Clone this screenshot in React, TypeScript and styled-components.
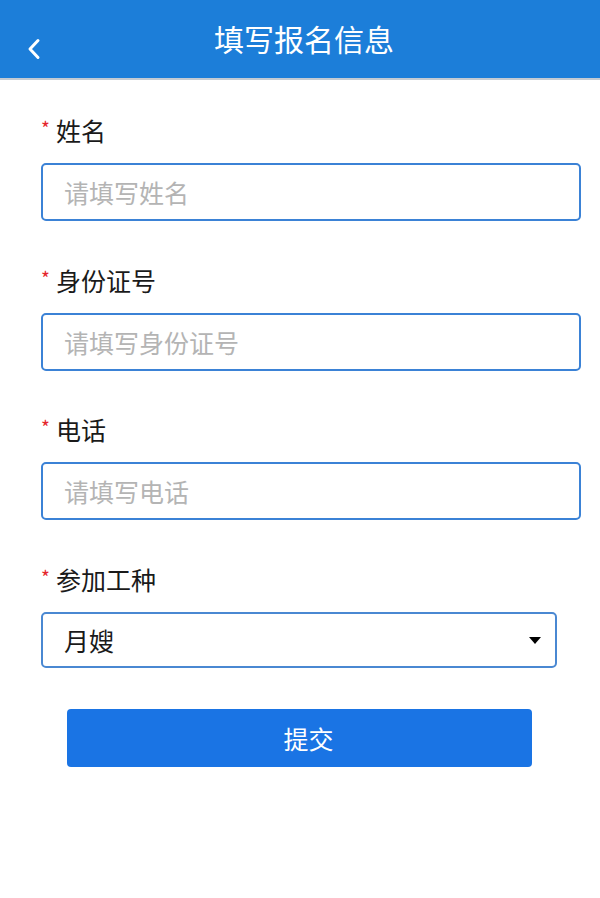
import React, { useState } from 'react';
import styled, { createGlobalStyle } from 'styled-components';

const GlobalStyle = createGlobalStyle`
  html, body {
    margin: 0;
    padding: 0;
    background: #fff;
    font-family: "Noto Sans CJK SC", "Noto Sans", sans-serif;
  }
  * {
    box-sizing: border-box;
  }
`;

const StyledPage = styled.div`
  width: 600px;
  min-height: 898px;
  background: #fff;
`;

const StyledHeader = styled.header`
  height: 80px;
  display: grid;
  grid-template-columns: 1fr auto 1fr;
  align-items: center;
  background-color: #1c7ed9;
  border-bottom: 2px solid #c4cbd3;
`;

const StyledBack = styled.button`
  justify-self: start;
  margin: 20px 0 0 23px;
  padding: 4px;
  border: 0;
  background: transparent;
  display: flex;
  cursor: pointer;
`;

const StyledTitle = styled.h1`
  margin: 0 0 2px 8px;
  font-size: 30px;
  font-weight: 400;
  line-height: 40px;
  color: #fff;
`;

const StyledForm = styled.form`
  padding: 35px 19px 0 41px;
  display: flex;
  flex-direction: column;
`;

const StyledField = styled.div`
  display: flex;
  flex-direction: column;
  margin-bottom: 43.5px;

  &:last-of-type {
    margin-bottom: 41px;
  }
`;

const StyledLabel = styled.label`
  display: flex;
  align-items: center;
  height: 30px;
  margin-bottom: 18px;
  font-size: 25px;
  line-height: 30px;
  color: #1a1a1a;
`;

const StyledRequired = styled.span`
  color: #e5262b;
  font-size: 19px;
  line-height: 19px;
  margin: -5px 6px 0 0;
`;

const StyledInput = styled.input`
  width: 540px;
  height: 58px;
  padding: 0 21px;
  border: 2px solid #3b82d6;
  border-radius: 5px;
  font-family: inherit;
  font-size: 25px;
  color: #1a1a1a;
  outline: none;
  background: #fff;

  &::placeholder {
    color: #b4b4b4;
  }
`;

const StyledSelectWrap = styled.div`
  position: relative;
  width: 516px;
`;

const StyledSelect = styled.select`
  width: 100%;
  height: 56px;
  padding: 0 21px;
  border: 2px solid #4a88d2;
  border-radius: 5px;
  font-family: inherit;
  font-size: 25px;
  color: #1a1a1a;
  background: #fff;
  appearance: none;
  -webkit-appearance: none;
  outline: none;
`;

const StyledCaret = styled.span`
  position: absolute;
  right: 16px;
  top: 25px;
  width: 0;
  height: 0;
  border-left: 6px solid transparent;
  border-right: 6px solid transparent;
  border-top: 7px solid #000;
  pointer-events: none;
`;

const StyledSubmit = styled.button`
  width: 465px;
  height: 58px;
  margin-left: 26px;
  padding: 0 0 0 18px;
  border: 0;
  border-radius: 4px;
  background-color: #1a74e4;
  color: #fff;
  font-family: inherit;
  font-size: 25px;
  cursor: pointer;
`;

const fields = [
  { id: 'name', label: '姓名', placeholder: '请填写姓名' },
  { id: 'idcard', label: '身份证号', placeholder: '请填写身份证号' },
  { id: 'phone', label: '电话', placeholder: '请填写电话' },
];

const App = () => {
  const [job, setJob] = useState('月嫂');

  return (
    <StyledPage>
      <GlobalStyle />
      <StyledHeader>
        <StyledBack type="button" aria-label="返回">
          <svg width="14" height="22" viewBox="0 0 14 22" fill="none">
            <path
              d="M11 2.5 L3 11 L11 19.5"
              stroke="#fff"
              strokeWidth="3"
              strokeLinecap="round"
              strokeLinejoin="round"
            />
          </svg>
        </StyledBack>
        <StyledTitle>填写报名信息</StyledTitle>
        <span />
      </StyledHeader>
      <StyledForm onSubmit={(e) => e.preventDefault()}>
        {fields.map((field) => (
          <StyledField key={field.id}>
            <StyledLabel htmlFor={field.id}>
              <StyledRequired>*</StyledRequired>
              {field.label}
            </StyledLabel>
            <StyledInput id={field.id} placeholder={field.placeholder} />
          </StyledField>
        ))}
        <StyledField>
          <StyledLabel htmlFor="job">
            <StyledRequired>*</StyledRequired>
            参加工种
          </StyledLabel>
          <StyledSelectWrap>
            <StyledSelect
              id="job"
              value={job}
              onChange={(e) => setJob(e.target.value)}
            >
              <option value="月嫂">月嫂</option>
              <option value="育婴师">育婴师</option>
              <option value="保姆">保姆</option>
            </StyledSelect>
            <StyledCaret />
          </StyledSelectWrap>
        </StyledField>
        <StyledSubmit type="submit">提交</StyledSubmit>
      </StyledForm>
    </StyledPage>
  );
};

export default App;
